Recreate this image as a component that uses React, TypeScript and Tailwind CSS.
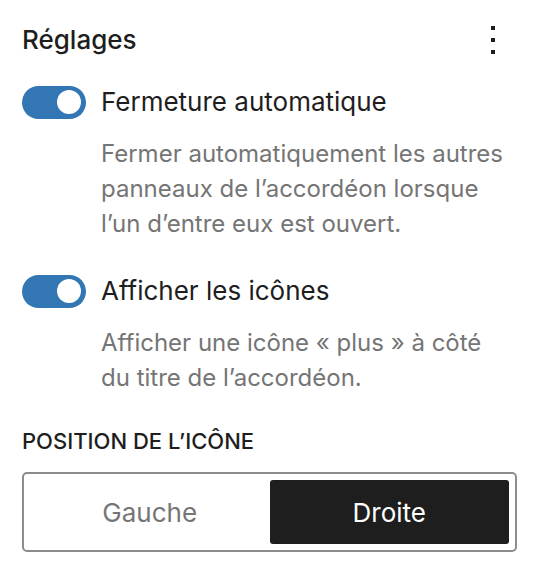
import { useState } from "react";

function Toggle({ on, onChange }: { on: boolean; onChange: () => void }) {
  return (
    <button
      onClick={onChange}
      className={`relative flex-shrink-0 w-[64px] h-[33px] rounded-full ${on ? "bg-[#3277b3]" : "bg-white border-2 border-[#1e1e1e]"}`}
    >
      <span
        className={`absolute top-[4.5px] w-[24px] h-[24px] rounded-full ${on ? "left-[35px] bg-white" : "left-[4px] bg-[#1e1e1e]"}`}
      />
    </button>
  );
}

function ToggleField({
  label,
  help,
  on,
  onChange,
}: {
  label: string;
  help: string[];
  on: boolean;
  onChange: () => void;
}) {
  return (
    <div className="flex flex-col">
      <div className="flex items-center gap-[15px] h-[34px]">
        <Toggle on={on} onChange={onChange} />
        <span className="text-[26px] text-[#1e1e1e] leading-none">{label}</span>
      </div>
      <p className="pl-[79px] mt-[17px] text-[24px] leading-[35px] text-[#757575]">
        {help.map((l, i) => (
          <span key={i} className="block">
            {l}
          </span>
        ))}
      </p>
    </div>
  );
}

export default function App() {
  const [autoClose, setAutoClose] = useState(true);
  const [showIcons, setShowIcons] = useState(true);
  const [position, setPosition] = useState<"left" | "right">("right");

  return (
    <div
      className="w-[538px] h-[570px] bg-white pl-[22px] pr-[21px] pt-[21px] overflow-hidden"
      style={{ fontFamily: "Inter, 'Noto Sans', sans-serif" }}
    >
      {/* Header */}
      <div className="flex items-center justify-between h-[36px]">
        <h2 className="text-[26px] font-medium text-[#1e1e1e]">Réglages</h2>
        <button className="flex flex-col items-center gap-[8px] w-[24px] mr-[12px] mt-[2px]">
          <span className="w-[4px] h-[4px] bg-[#1e1e1e]" />
          <span className="w-[4px] h-[4px] bg-[#1e1e1e]" />
          <span className="w-[4px] h-[4px] bg-[#1e1e1e]" />
        </button>
      </div>

      <div className="mt-[28px] flex flex-col gap-[33px]">
        <ToggleField
          label="Fermeture automatique"
          help={[
            "Fermer automatiquement les autres",
            "panneaux de l’accordéon lorsque",
            "l’un d’entre eux est ouvert.",
          ]}
          on={autoClose}
          onChange={() => setAutoClose((v) => !v)}
        />
        <ToggleField
          label="Afficher les icônes"
          help={["Afficher une icône « plus » à côté", "du titre de l’accordéon."]}
          on={showIcons}
          onChange={() => setShowIcons((v) => !v)}
        />
      </div>

      {/* Icon position */}
      <div className="mt-[31px]">
        <div className="text-[22px] font-medium uppercase text-[#1e1e1e] leading-[30px]">
          Position de l’icône
        </div>
        <div className="mt-[16px] flex border-2 border-[#8c8c8c] rounded-[5px] h-[80px] p-[6px]">
          <button
            onClick={() => setPosition("left")}
            className={`flex-1 rounded-[3px] text-[26px] ${position === "left" ? "bg-[#1e1e1e] text-white" : "text-[#757575]"}`}
          >
            Gauche
          </button>
          <button
            onClick={() => setPosition("right")}
            className={`flex-1 rounded-[3px] text-[26px] ${position === "right" ? "bg-[#1e1e1e] text-white" : "text-[#757575]"}`}
          >
            Droite
          </button>
        </div>
      </div>
    </div>
  );
}
